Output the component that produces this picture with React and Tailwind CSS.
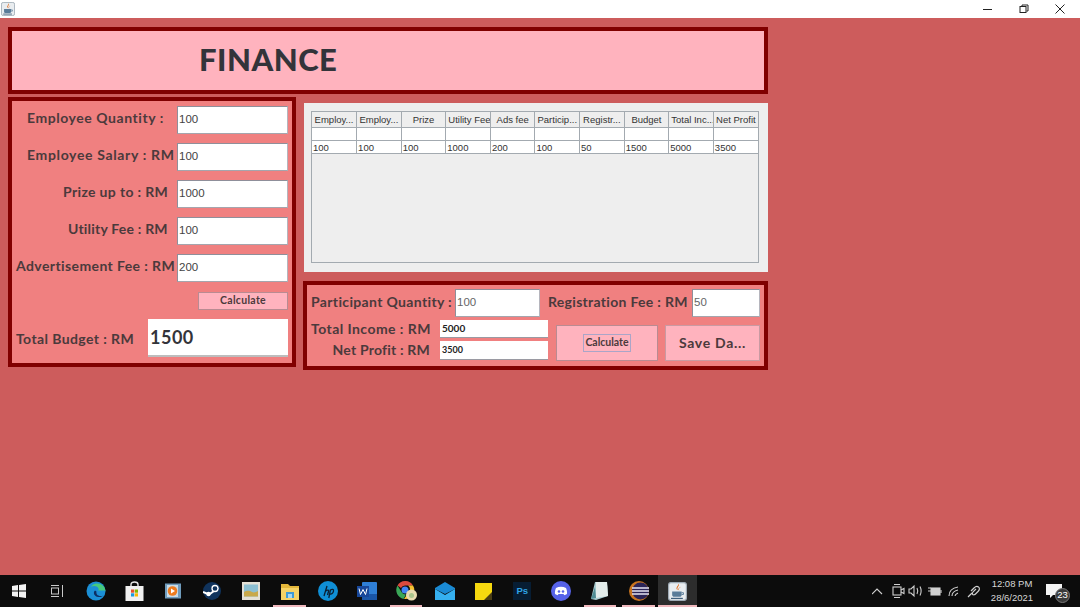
import React from "react";

const head = "font-['Lato',sans-serif] font-bold text-[#4b3a3c] whitespace-nowrap";
const plain = "font-['Liberation_Sans',sans-serif]";

const budgetRows = [
  { label: "Employee Quantity :", value: "100", pad: "pl-[15px] tracking-[0.55px]" },
  { label: "Employee Salary : RM", value: "100", pad: "pl-[15px] tracking-[0.65px]" },
  { label: "Prize up to : RM", value: "1000", pad: "pl-[51px] tracking-[0.35px]" },
  { label: "Utility Fee : RM", value: "100", pad: "pl-[56px] tracking-[0.2px]" },
  { label: "Advertisement Fee : RM", value: "200", pad: "pl-[4px] tracking-[0.4px]" },
];

const columns = ["Employ...", "Employ...", "Prize", "Utility Fee", "Ads fee", "Particip...", "Registr...", "Budget", "Total Inc...", "Net Profit"];
const tableRow = ["100", "100", "100", "1000", "200", "100", "50", "1500", "5000", "3500"];

function Field({ value, className }) {
  return (
    <div className={`bg-white border border-t-[#8f8f9a] border-l-[#8f8f9a] border-r-[#b5b5bd] border-b-[#a5a5ad] flex items-center pl-[1px] text-[11.5px] text-[#444] ${plain} ${className}`}>
      {value}
    </div>
  );
}

function JavaIcon({ size }) {
  return (
    <svg width={size} height={size} viewBox="0 0 16 16">
      <rect x="0.5" y="0.5" width="15" height="15" rx="2" fill="#e9edf0" stroke="#9fabb5" />
      <path d="M8.800 1.500c1.500 2-2 3-.5 5.500-2.800-1.800.5-3.500.5-5.500z" fill="#e2640f" />
      <path d="M10.800 4c-1.200 1.200-2.300 1.700-1.200 3.300-2.200-1.200 0-2.600 1.200-3.300z" fill="#e2640f" />
      <path d="M3.500 8h8v3c0 1-.8 1.500-1.500 1.500H5c-.7 0-1.500-.5-1.500-1.500z" fill="#5a7c99" />
      <path d="M11.500 9h1.500v1.500h-1.500" fill="none" stroke="#5a7c99" strokeWidth="0.800" />
      <path d="M2.500 13.800h10" stroke="#3f5f7c" strokeWidth="1" />
    </svg>
  );
}

const taskIcons = [
  // task view
  <svg key="tv" width="14" height="14" viewBox="0 0 14 14" fill="none" stroke="#c9c9c9">
    <path d="M1 1.500h8M1 12.500h8M12.500 1v12" />
    <rect x="1.500" y="4" width="7" height="6" />
  </svg>,
  // edge
  <svg key="edge" width="20" height="20" viewBox="0 0 20 20">
    <circle cx="10" cy="10" r="9.500" fill="#1b8fd6" />
    <path d="M19.500 10.500c0-5-4-8-8.500-8-3 0-5 1.500-6 3.500 2-1.500 6-1.500 7.500 1.500.4.900 0 1.500-.5 2h8z" fill="#47c97d" />
    <path d="M9 9.500c-2 1.500-1.500 6 3.500 6.500 2 .2 4-.5 5-1.500-2.500 1-5.500.5-6.500-1-1-1.300-.5-3-.5-3z" fill="#0d2f63" />
  </svg>,
  // store
  <svg key="store" width="19" height="20" viewBox="0 0 19 20">
    <path d="M6 6V3.500C6 2 7.500 1 9.500 1S13 2 13 3.500V6" fill="none" stroke="#e8e8e8" strokeWidth="1.400" />
    <rect x="0.500" y="5" width="18" height="15" fill="#f1f1f1" />
    <rect x="6" y="8.500" width="3.200" height="3.200" fill="#e8512c" />
    <rect x="9.800" y="8.500" width="3.200" height="3.200" fill="#7fba00" />
    <rect x="6" y="12.300" width="3.200" height="3.200" fill="#1b9be0" />
    <rect x="9.800" y="12.300" width="3.200" height="3.200" fill="#fdb900" />
  </svg>,
  // media player
  <svg key="media" width="16" height="16" viewBox="0 0 16 16">
    <rect x="0" y="0.500" width="16" height="15" fill="#6f9cbd" />
    <rect x="2" y="2" width="11" height="12" fill="#c9dbe6" />
    <circle cx="7.500" cy="8" r="4.800" fill="#ee7b1e" />
    <path d="M6 5.500v5l4-2.500z" fill="#fff" />
  </svg>,
  // steam
  <svg key="steam" width="18" height="18" viewBox="0 0 18 18">
    <circle cx="9" cy="9" r="9" fill="#10335c" />
    <path d="M0 10l6 2.500 5-3.500 4-3" stroke="#fff" strokeWidth="2" fill="none" />
    <circle cx="12" cy="6.500" r="3" fill="#10335c" stroke="#fff" strokeWidth="1.300" />
    <circle cx="5.500" cy="12" r="2.200" fill="#fff" />
  </svg>,
  // photo
  <svg key="photo" width="18" height="18" viewBox="0 0 18 18">
    <rect x="0" y="0" width="18" height="18" fill="#e4e1d6" />
    <rect x="2" y="2.500" width="14" height="12" fill="#8cc0d2" />
    <path d="M2 14.500V10c3-2 6-1 8 0s4 0 6-1v5.500z" fill="#c9a94a" />
  </svg>,
  // folder
  <svg key="folder" width="18" height="17" viewBox="0 0 18 17">
    <path d="M0 1h7l2 2h9v14H0z" fill="#e4b73a" />
    <rect x="0" y="5" width="18" height="12" fill="#f6d365" />
    <rect x="5" y="9" width="8" height="6" fill="#3f9bd5" />
    <rect x="7" y="11" width="4" height="4" fill="#a9d7f0" />
  </svg>,
  // hp
  <svg key="hp" width="20" height="20" viewBox="0 0 20 20">
    <circle cx="10" cy="10" r="10" fill="#0f8fd6" />
    <path d="M6 15l3-10M8 10c1.500-1.500 3-1 2.500.5L9.500 14M12.500 8.500L10.800 17M12.500 9c1.500-1 3.500-.8 3 1.200-.4 2-2 3.300-3.600 2.800" stroke="#0b1f33" strokeWidth="1.300" fill="none" />
  </svg>,
  // word
  <svg key="word" width="20" height="18" viewBox="0 0 20 18">
    <rect x="5" y="0" width="15" height="18" rx="1" fill="#2f7fd6" />
    <rect x="5" y="12" width="15" height="6" fill="#1a56a8" />
    <rect x="0" y="4" width="12" height="11" fill="#17479a" />
    <path d="M2 6.500l1.500 6 2.500-5 2.500 5 1.500-6" stroke="#fff" strokeWidth="1" fill="none" />
  </svg>,
  // chrome
  <svg key="chrome" width="22" height="20" viewBox="0 0 22 20" className="ml-[3px]">
    <path d="M9 0a9 9 0 0 1 8 4.500H9a4.500 4.500 0 0 0-4 2.500L1.500 4.500A9 9 0 0 1 9 0z" fill="#dc4a3d" />
    <path d="M1.500 4.500L5.500 11A4.500 4.500 0 0 0 10 13.400L7.500 17.900A9 9 0 0 1 1.500 4.500z" fill="#3aa757" />
    <path d="M17 4.500A9 9 0 0 1 8 18l4-6a4.500 4.500 0 0 0 0-7.500z" fill="#f5c230" />
    <circle cx="9" cy="9" r="3.500" fill="#4285f4" />
    <circle cx="15.500" cy="14" r="5.500" fill="#e9dcb0" />
    <circle cx="15.500" cy="14.500" r="2.500" fill="#a9c58c" />
  </svg>,
  // mail
  <svg key="mail" width="20" height="18" viewBox="0 0 20 18">
    <path d="M0 6l10-6 10 6v1L10 12 0 7z" fill="#1a8ad4" />
    <path d="M0 7l10 6 10-6v11H0z" fill="#35b0f0" />
  </svg>,
  // sticky
  <svg key="sticky" width="17" height="17" viewBox="0 0 17 17">
    <path d="M0 0h17v10l-7 7H0z" fill="#f6d80f" />
    <path d="M17 9v8H9z" fill="#4a3d14" />
  </svg>,
  // photoshop
  <div key="ps" className={`w-[18px] h-[18px] bg-[#071d33] flex items-center justify-center text-[9.5px] font-bold text-[#2fa3e6] ${plain}`}>Ps</div>,
  // discord
  <svg key="discord" width="20" height="20" viewBox="0 0 20 20">
    <circle cx="10" cy="10" r="10" fill="#5662e8" />
    <path d="M5 7c3-1.800 7-1.800 10 0 .9 2 1.200 4 1 6-1 .7-2 1-2.700 1.200L12.500 13h-5l-.8 1.200C6 14 5 13.700 4 13c-.2-2 .1-4 1-6z" fill="#fff" />
    <circle cx="8" cy="10.500" r="1.300" fill="#5662e8" />
    <circle cx="12" cy="10.500" r="1.300" fill="#5662e8" />
  </svg>,
  // notepad
  <svg key="notepad" width="18" height="20" viewBox="0 0 18 20">
    <path d="M4 1h12l1 14-12 4-5-1z" fill="#a9ccd0" />
    <path d="M5 1h11l1 14-12 2z" fill="#e3ecea" />
    <path d="M0 18l4-12 1 11z" fill="#4f8c93" />
  </svg>,
  // eclipse
  <svg key="eclipse" width="20" height="20" viewBox="0 0 20 20">
    <circle cx="10" cy="10" r="10" fill="#c9741f" />
    <circle cx="11.500" cy="10" r="8.500" fill="#2b2457" />
    <path d="M3 7h17M3 10h17M3 13h17" stroke="#e6e3f2" strokeWidth="1.300" />
  </svg>,
];

function Taskbar() {
  const underlined = [6, 9, 14, 15];
  return (
    <div className="h-[32px] bg-[#0c0c0c] flex items-stretch shrink-0">
      <div className="w-[37.4px] flex items-center justify-center">
        <svg width="14" height="14" viewBox="0 0 14 14" fill="#f4f4f4">
          <path d="M0 2l6-.9V6.600H0zM7 .9L14 0v6.600H7zM0 7.400h6v5.500L0 12zM7 7.400h7V14l-7-1z" />
        </svg>
      </div>
      {taskIcons.map((icon, i) => (
        <div key={i} className="w-[38.8px] relative flex items-center justify-center">
          {icon}
          {underlined.includes(i) && <div className="absolute bottom-0 left-[3px] right-[3px] h-[2px] bg-[#f0b8bd]" />}
        </div>
      ))}
      <div className="w-[38.8px] relative flex items-center justify-center bg-[#2d2d2d]">
        <JavaIcon size={19} />
        <div className="absolute bottom-0 left-0 right-0 h-[2px] bg-[#f0b8bd]" />
      </div>
      <div className="ml-auto flex items-center text-[#d8d8d8]">
        <svg width="90" height="16" viewBox="0 0 90 16" fill="none" stroke="#d0d0d0" strokeWidth="1.100">
          <path d="M0 11l5-5 5 5" />
          <rect x="21" y="4" width="8" height="8" />
          <path d="M22 1.500h6M22 14.500h6M29 7l3-1.500v5L29 9" />
          <path d="M37 6v4h2l3 3V3L39 6zM45 5c1 2 1 4 0 6M48 3.500c1.500 3 1.500 6 0 9" />
          <rect x="59" y="5" width="9" height="7" fill="#d0d0d0" />
          <path d="M56 5h3M56 8h3M69 7v3" />
          <path d="M77 13c0-5 3-8 9-9M80 13c0-3 2-5 6-6M83 13c0-1 1-2 3-3" />
        </svg>
        <svg width="16" height="16" viewBox="0 0 16 16" fill="none" stroke="#d0d0d0" strokeWidth="1.200" className="ml-[4px]">
          <path d="M2 14l4-4M5 8l3-3c1.500-1.500 3-2 4.500-1s1 3-.5 4.500L9.500 11c-1 1-2.500 1-3 .2s0-1.700.8-2.500l2.700-2.700" />
        </svg>
        <div className={`w-[50px] ml-[5px] flex flex-col items-center text-[9.5px] leading-[14px] whitespace-nowrap ${plain}`}>
          <span>12:08 PM</span>
          <span>28/6/2021</span>
        </div>
        <div className="w-[34px] mr-[9px] relative flex items-center justify-center self-stretch">
          <svg width="16" height="15" viewBox="0 0 16 15" fill="#f4f4f4">
            <path d="M0 0h16v11H7l-3 3v-3H0z" />
          </svg>
          <div className={`absolute right-[1px] top-[13px] w-[15px] h-[15px] rounded-full bg-[#3a3a3a] border border-[#777] flex items-center justify-center text-[9.5px] text-white ${plain}`}>23</div>
        </div>
      </div>
    </div>
  );
}

export default function App() {
  return (
    <div className="w-[1080px] h-[607px] flex flex-col overflow-hidden bg-[#cd5c5c]">
      {/* title bar */}
      <div className="h-[18px] bg-white flex items-center shrink-0">
        <div className="ml-[1px]"><JavaIcon size={14} /></div>
        <div className="ml-auto flex items-center text-[#222]">
          <div className="w-[36px] flex justify-center">
            <svg width="10" height="10" viewBox="0 0 10 10" stroke="#222" fill="none"><path d="M0 5.500h9" /></svg>
          </div>
          <div className="w-[36px] flex justify-center">
            <svg width="10" height="10" viewBox="0 0 10 10" stroke="#222" fill="none"><rect x="1" y="2.500" width="6" height="6" /><path d="M3 2.500V1h6v6H7.500" /></svg>
          </div>
          <div className="w-[36px] mr-[2px] flex justify-center">
            <svg width="10" height="10" viewBox="0 0 10 10" stroke="#222" fill="none"><path d="M.5.500l9 9M9.500.500l-9 9" /></svg>
          </div>
        </div>
      </div>

      <div className="flex-1 min-h-0 pl-[8px] pt-[9px]">
        {/* header */}
        <div className="w-[760px] h-[67px] border-[4px] border-[#800000] bg-[#ffb3be] flex items-center pl-[187px] pb-[2px]">
          <span className="font-['Lato',sans-serif] font-black text-[31px] text-[#33343a] tracking-[0.5px]">FINANCE</span>
        </div>

        <div className="flex mt-[3px]">
          {/* budget panel */}
          <div className="w-[288px] h-[270px] border-[4px] border-[#800000] bg-[#f08080] flex flex-col pt-[5px]">
            <div className="flex flex-col gap-[9px]">
              {budgetRows.map((row) => (
                <div key={row.label} className="flex items-center">
                  <div className={`w-[165px] pb-[5px] text-[14px] ${head} ${row.pad}`}>{row.label}</div>
                  <Field value={row.value} className="w-[111px] h-[28px]" />
                </div>
              ))}
            </div>
            <div className={`self-end mr-[4px] mt-[10px] w-[90px] h-[18px] bg-[#ffb3be] border border-[#b98b92] flex items-center justify-center text-[10.5px] tracking-[0.3px] ${head}`}>Calculate</div>
            <div className="flex items-center mt-[9px]">
              <div className={`w-[136px] pl-[4px] text-[14px] tracking-[0.4px] ${head}`}>Total Budget : RM</div>
              <div className="w-[140px] h-[38px] bg-white border-b-2 border-[#bdbdbd] flex items-center pl-[2px] font-['Lato',sans-serif] font-bold text-[18px] text-[#33343a] tracking-[0.5px]">1500</div>
            </div>
          </div>

          <div className="ml-[8px] flex flex-col">
            {/* table panel */}
            <div className="w-[464px] h-[169px] mt-[6px] bg-[#eeeeee] pl-[7px] pt-[8px]">
              <div className="w-[448px] h-[152px] border border-[#a3aab0]">
                <table className={`w-full table-fixed border-collapse text-[9.5px] text-[#333] ${plain}`}>
                  <thead>
                    <tr className="h-[15px]">
                      {columns.map((col, i) => (
                        <th key={i} className="font-normal px-[2px] pt-[1px] border-r border-b border-[#a3aab0] text-center whitespace-nowrap overflow-hidden last:border-r-0">{col}</th>
                      ))}
                    </tr>
                  </thead>
                  <tbody className="bg-white">
                    <tr className="h-[13px]">
                      {columns.map((col, i) => (
                        <td key={i} className="border-r border-b border-[#a3aab0] last:border-r-0" />
                      ))}
                    </tr>
                    <tr className="h-[13px]">
                      {tableRow.map((val, i) => (
                        <td key={i} className="px-[1px] leading-none border-r border-b border-[#a3aab0] last:border-r-0">{val}</td>
                      ))}
                    </tr>
                  </tbody>
                </table>
              </div>
            </div>

            {/* income panel */}
            <div className="w-[465px] h-[89px] mt-[9px] -ml-[1px] border-[4px] border-[#800000] bg-[#f08080] pl-[4px] pt-[4px]">
              <div className="flex items-center h-[28px]">
                <div className={`w-[144px] pb-[4px] text-[14px] tracking-[0.35px] ${head}`}>Participant Quantity :</div>
                <Field value="100" className="w-[85px] h-[28px] text-[#666]" />
                <div className={`w-[152px] pl-[8px] pb-[4px] text-[14px] tracking-[0.3px] ${head}`}>Registration Fee : RM</div>
                <Field value="50" className="w-[68px] h-[28px] text-[#666]" />
              </div>
              <div className="flex mt-[3px]">
                <div className="flex flex-col gap-[3px] w-[129px] shrink-0 text-[14px]">
                  <div className="h-[18px] flex items-center pb-[1px]">
                    <span className={`tracking-[0.45px] ${head}`}>Total Income : RM</span>
                  </div>
                  <div className="h-[19px] flex items-center justify-end pr-[10px] pb-[3px]">
                    <span className={`tracking-[0.2px] ${head}`}>Net Profit : RM</span>
                  </div>
                </div>
                <div className="flex flex-col gap-[3px] w-[108px] shrink-0">
                  <div className="h-[18px] bg-white border-b border-[#9a9aa2] pl-[2px] flex items-center font-['Lato',sans-serif] font-bold text-[10px] text-[#222]">5000</div>
                  <div className="h-[19px] bg-white border-b border-[#9a9aa2] pl-[2px] flex items-center font-['Lato',sans-serif] font-bold text-[9px] text-[#222]">3500</div>
                </div>
                <div className="w-[102px] h-[36px] mt-[5px] ml-[8px] bg-[#ffb3be] border border-[#b98b92] flex items-center justify-center">
                  <span className={`text-[10.5px] px-[1px] border border-[#aaa5c8] ${head}`}>Calculate</span>
                </div>
                <div className={`w-[95px] h-[36px] mt-[5px] ml-[7px] bg-[#ffb3be] border border-[#c99aa2] flex items-center justify-center pb-[2px] text-[14px] tracking-[0.7px] ${head}`}>Save Da...</div>
              </div>
            </div>
          </div>
        </div>
      </div>

      <Taskbar />
    </div>
  );
}
